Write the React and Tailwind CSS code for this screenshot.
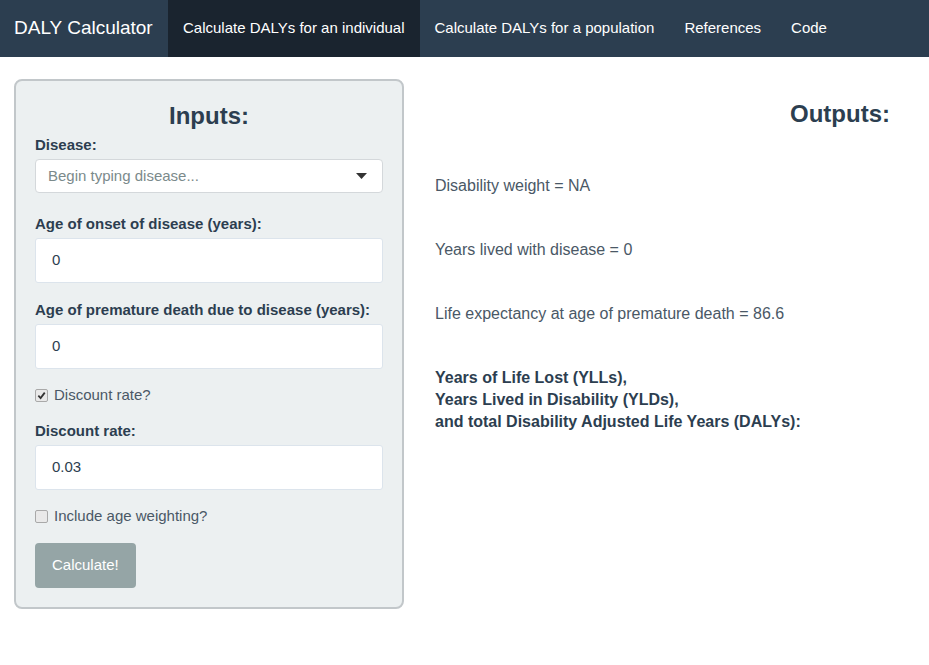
import React from 'react';

const font = { fontFamily: '"Liberation Sans", Arial, Helvetica, sans-serif' };

const NavItem = ({ label, active }) => (
  <div
    className={`h-full flex items-center px-[15px] text-[15px] text-white ${active ? 'bg-[#1a242f]' : ''}`}
  >
    {label}
  </div>
);

const Label = ({ children }) => (
  <div className="text-[15px] font-bold text-[#2c3e50] leading-[21px] mb-[4px]">{children}</div>
);

const TextInput = ({ value }) => (
  <div className="h-[45px] bg-white border border-[#dce4ec] rounded-[3px] flex items-center px-[16px] text-[15px] text-[#2c3e50]">
    {value}
  </div>
);

const Check = ({ checked, label }) => (
  <div className="flex items-center gap-[6px] h-[20px] text-[15px] text-[#4a5866]">
    <span className="w-[13px] h-[13px] border border-[#a9a9a9] rounded-[2px] bg-[#e9e9e9] flex items-center justify-center">
      {checked && (
        <svg width="9" height="9" viewBox="0 0 10 10">
          <path d="M1.5 5.2 L4 7.8 L8.6 1.8" fill="none" stroke="#333" strokeWidth="2" />
        </svg>
      )}
    </span>
    {label}
  </div>
);

export default function App() {
  return (
    <div className="min-h-screen bg-white" style={font}>
      {/* Navbar */}
      <nav className="h-[57px] bg-[#2c3e50] flex items-center">
        <div className="px-[14px] text-[19px] text-white w-[168px]">DALY Calculator</div>
        <div className="flex h-full">
          <NavItem label="Calculate DALYs for an individual" active />
          <NavItem label="Calculate DALYs for a population" />
          <NavItem label="References" />
          <NavItem label="Code" />
        </div>
      </nav>

      <div className="flex px-[14px] pt-[22px]">
        {/* Sidebar */}
        <div className="w-[390px] shrink-0 bg-[#ecf0f1] border-2 border-[#c2c7ca] rounded-[8px] px-[19px] pt-[20px] pb-[19px]">
          <h2 className="text-[24px] font-bold text-[#2c3e50] text-center leading-[30px] mb-[3px]">Inputs:</h2>

          <Label>Disease:</Label>
          <div className="h-[34px] bg-white border border-[#d4d8db] rounded-[4px] flex items-center justify-between pl-[12px] pr-[15px] text-[15px] text-[#7b8a8b]">
            <span>Begin typing disease...</span>
            <svg width="11" height="6" viewBox="0 0 11 6">
              <path d="M0 0 L11 0 L5.5 6 Z" fill="#333" />
            </svg>
          </div>

          <div className="mt-[20px]">
            <Label>Age of onset of disease (years):</Label>
            <TextInput value="0" />
          </div>

          <div className="mt-[16px]">
            <Label>Age of premature death due to disease (years):</Label>
            <TextInput value="0" />
          </div>

          <div className="mt-[16px]">
            <Check checked label="Discount rate?" />
          </div>

          <div className="mt-[15px]">
            <Label>Discount rate:</Label>
            <TextInput value="0.03" />
          </div>

          <div className="mt-[16px]">
            <Check label="Include age weighting?" />
          </div>

          <button className="mt-[17px] h-[45px] px-[17px] bg-[#95a5a6] rounded-[4px] text-white text-[15px]">
            Calculate!
          </button>
        </div>

        {/* Main */}
        <div className="flex-1 pl-[31px] pr-[25px] pt-[20px]">
          <h2 className="text-[24px] font-bold text-[#2c3e50] text-right leading-[30px]">Outputs:</h2>
          <div className="mt-[46px] text-[16px] text-[#4a5866] leading-[22px]">
            <p>Disability weight = NA</p>
            <p className="mt-[42px]">Years lived with disease = 0</p>
            <p className="mt-[42px]">Life expectancy at age of premature death = 86.6</p>
            <p className="mt-[42px] font-bold text-[#2c3e50]">
              Years of Life Lost (YLLs),
              <br />
              Years Lived in Disability (YLDs),
              <br />
              and total Disability Adjusted Life Years (DALYs):
            </p>
          </div>
        </div>
      </div>
    </div>
  );
}
